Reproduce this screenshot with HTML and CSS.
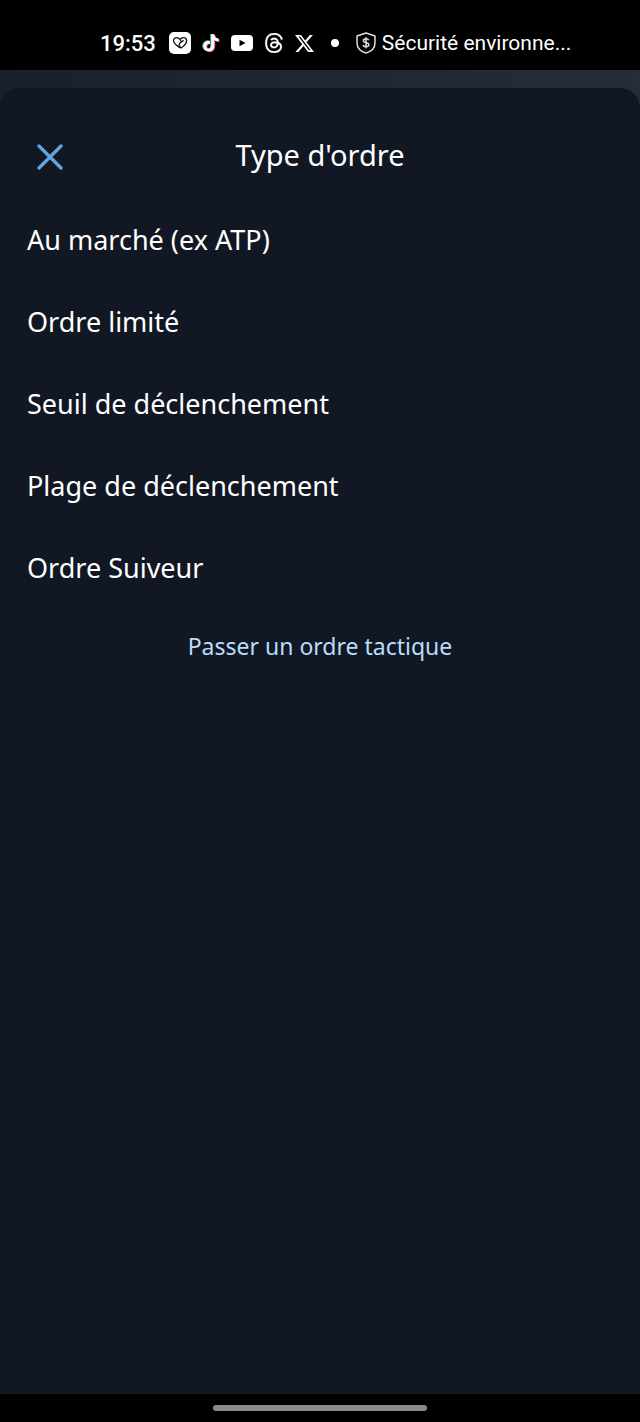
FILE: index.html
```html
<!DOCTYPE html>
<html lang="fr">
<head>
<meta charset="utf-8">
<meta name="viewport" content="width=device-width, initial-scale=1">
<title>Type d'ordre</title>
<link rel="stylesheet" href="styles.css">
</head>
<body>
<div class="status-bar">
  <time class="clock">19:53</time>
  <div class="apps">
    <svg class="icon-heart" viewBox="0 0 22 22" aria-hidden="true"><rect width="22" height="22" rx="5" fill="#fff"/><path d="M10.500 15.500C7.500 13.500 4.500 11.500 4.500 8.800C4.500 6.800 6 5.600 7.700 5.600C9.300 5.600 10.300 6.400 11 7.500C11.800 6.400 13 5.600 14.500 5.600C16.300 5.600 17.600 7 17.600 8.700C17.600 11.500 14.500 14.300 12 16C9.800 14 9.600 12.200 11.200 10.800C12.500 9.800 13.500 9.800 14.200 8.600M11 7.500 12.300 9.800" fill="none" stroke="#111" stroke-width="1.300" stroke-linecap="round" stroke-linejoin="round"/></svg>
    <svg class="icon-tiktok" viewBox="0 0 25 25" aria-hidden="true"><defs><path id="note" d="M12.525.02c1.31-.02 2.61-.01 3.91-.02.08 1.53.63 3.09 1.75 4.17 1.12 1.11 2.7 1.62 4.24 1.79v4.03c-1.44-.05-2.89-.35-4.2-.97-.57-.26-1.1-.59-1.62-.93-.01 2.92.01 5.84-.02 8.75-.08 1.4-.54 2.79-1.35 3.94-1.31 1.92-3.58 3.17-5.91 3.21-1.43.08-2.86-.31-4.08-1.03-2.02-1.19-3.44-3.37-3.65-5.71-.02-.5-.03-1-.01-1.49.18-1.9 1.12-3.72 2.58-4.96 1.66-1.44 3.98-2.13 6.15-1.72.02 1.48-.04 2.96-.04 4.44-.99-.32-2.15-.23-3.02.37-.63.41-1.11 1.04-1.36 1.75-.21.51-.15 1.07-.14 1.61.24 1.64 1.82 3.02 3.5 2.87 1.12-.01 2.19-.66 2.77-1.61.19-.33.4-.67.41-1.06.1-1.79.06-3.57.07-5.36.01-4.03-.01-8.05.02-12.07z"/></defs><use href="#note" x="-1" fill="#4de1dc"/><use href="#note" x="1.800" y="1" fill="#ef3e5c"/><use href="#note" x=".5" y=".4" fill="#fff"/></svg>
    <svg class="icon-youtube" viewBox="0 0 22 16" aria-hidden="true"><rect width="22" height="16" rx="4" fill="#fff"/><path d="M8.500 4.800 14.500 8 8.500 11.200Z" fill="#000"/></svg>
    <svg class="icon-threads" viewBox="0 0 24 24" aria-hidden="true"><path fill="#fff" stroke="#fff" stroke-width=".3" d="M12.186 24h-.007c-3.581-.024-6.334-1.205-8.184-3.509C2.35 18.44 1.5 15.586 1.472 12.01v-.017c.03-3.579.879-6.43 2.525-8.482C5.845 1.205 8.6.024 12.18 0h.014c2.746.02 5.043.725 6.826 2.098 1.677 1.29 2.858 3.13 3.509 5.467l-2.04.569c-1.104-3.96-3.898-5.984-8.304-6.015-2.91.022-5.11.936-6.54 2.717C4.307 6.504 3.616 8.914 3.589 12c.027 3.086.718 5.496 2.057 7.164 1.43 1.783 3.631 2.698 6.54 2.717 2.623-.02 4.358-.631 5.8-2.045 1.647-1.613 1.618-3.593 1.09-4.798-.31-.71-.873-1.3-1.634-1.75-.192 1.352-.622 2.446-1.284 3.272-.886 1.102-2.14 1.704-3.73 1.79-1.202.065-2.361-.218-3.259-.801-1.063-.689-1.685-1.74-1.752-2.964-.065-1.19.408-2.285 1.33-3.082.88-.76 2.119-1.207 3.583-1.291a13.853 13.853 0 0 1 3.02.142c-.126-.742-.375-1.332-.75-1.757-.513-.586-1.308-.883-2.359-.89h-.029c-.844 0-1.992.232-2.721 1.32L7.734 7.847c.98-1.454 2.568-2.256 4.478-2.256h.044c3.194.02 5.097 1.975 5.287 5.388.108.046.216.094.321.142 1.49.7 2.58 1.761 3.154 3.07.797 1.82.871 4.79-1.548 7.158-1.85 1.81-4.094 2.628-7.277 2.65Zm1.003-11.69c-.242 0-.487.007-.739.021-1.836.103-2.98.946-2.916 2.143.067 1.256 1.452 1.839 2.784 1.767 1.224-.065 2.818-.543 3.086-3.71a10.5 10.5 0 0 0-2.215-.221z"/></svg>
    <svg class="icon-x" viewBox="0 0 24 24" aria-hidden="true"><path fill="#fff" d="M18.901 1.153h3.68l-8.04 9.19L24 22.846h-7.406l-5.8-7.584-6.638 7.584H.474l8.6-9.83L0 1.154h7.594l5.243 6.932ZM17.61 20.644h2.039L6.486 3.24H4.298Z"/></svg>
  </div>
  <span class="dot"></span>
  <div class="notice">
    <svg class="icon-shield" viewBox="0 0 20 22" fill="none" stroke="#ddd" aria-hidden="true"><path d="M10 1 19 4V11C19 16 15 19.500 10 21C5 19.500 1 16 1 11V4Z" stroke-width="1.500" stroke-linejoin="round"/><path d="M12.700 8.300C12.300 7.100 11.300 6.800 10 6.800C8.500 6.800 7.400 7.500 7.400 8.700C7.400 11.500 12.800 9.800 12.800 12.700C12.800 14 11.600 14.700 10 14.700C8.400 14.700 7.400 14 7.200 12.800M10 5.300V16.200" stroke-width="1.500"/></svg>
    <span>Sécurité environne...</span>
  </div>
</div>
<div class="backdrop">
  <main class="sheet">
    <header class="sheet-header">
      <button class="close" type="button" aria-label="Fermer"><svg class="icon-close" viewBox="0 0 26 26" aria-hidden="true"><path d="M2 2 24 24M24 2 2 24" stroke="#5fa6dc" stroke-width="3.300" stroke-linecap="round"/></svg></button>
      <h1 class="title">Type d'ordre</h1>
    </header>
    <ul class="orders">
      <li><button class="order" type="button">Au marché (ex ATP)</button></li>
      <li><button class="order" type="button">Ordre limité</button></li>
      <li><button class="order" type="button">Seuil de déclenchement</button></li>
      <li><button class="order" type="button">Plage de déclenchement</button></li>
      <li><button class="order" type="button">Ordre Suiveur</button></li>
    </ul>
    <a class="tactical" href="#">Passer un ordre tactique</a>
  </main>
</div>
<div class="nav-bar"><span class="handle"></span></div>
</body>
</html>
```
FILE: styles.css
```css
* { box-sizing: border-box; }

body {
  margin: 0;
  min-height: 100vh;
  display: flex;
  flex-direction: column;
  background: #000;
  color: #fff;
  font-family: "Noto Sans", sans-serif;
}

button {
  border: 0;
  padding: 0;
  background: none;
  color: inherit;
  font: inherit;
  cursor: pointer;
}

svg { display: block; flex: none; }

.status-bar {
  height: 70px;
  padding: 16px 16px 0 100px;
  display: flex;
  align-items: center;
  font-family: Roboto, sans-serif;
  font-size: 21px;
  white-space: nowrap;
}

.clock {
  font-size: 22px;
  font-weight: 500;
}

.apps {
  display: flex;
  align-items: center;
  gap: 11px;
  margin: 0 17px 0 13px;
}

.icon-heart { width: 22px; height: 22px; }
.icon-tiktok { width: 18px; height: 20px; }
.icon-youtube { width: 22px; height: 16px; }
.icon-threads { width: 20px; height: 20px; }
.icon-x { width: 19px; height: 19px; }
.icon-shield { width: 20px; height: 22px; }
.icon-close { width: 26px; height: 26px; }

.dot {
  flex: none;
  width: 8px;
  height: 8px;
  border-radius: 50%;
  background: #fff;
}

.notice {
  display: flex;
  align-items: center;
  gap: 6px;
  margin-left: 17px;
}

.backdrop {
  flex: 1;
  display: flex;
  flex-direction: column;
  padding-top: 18px;
  background: linear-gradient(90deg, #18202b, #1f2733 50%, #242d39);
}

.sheet {
  flex: 1;
  display: flex;
  flex-direction: column;
  border-radius: 20px 20px 0 0;
  background: #111824;
}

.sheet-header {
  display: grid;
  grid-template-columns: 1fr auto 1fr;
  align-items: center;
  height: 110px;
  padding: 28px 37px 0;
}

.close { justify-self: start; }

.title {
  margin: 0;
  padding-bottom: 4px;
  font-size: 29px;
  line-height: 40px;
  font-weight: 400;
}

.orders {
  margin: 0;
  padding: 0;
  list-style: none;
}

.order {
  width: 100%;
  height: 82px;
  padding: 0 27px;
  font-size: 27px;
  text-align: left;
}

.tactical {
  align-self: center;
  padding: 20px;
  color: #b9dcfa;
  font-size: 23px;
  line-height: 36px;
  text-decoration: none;
}

.nav-bar {
  height: 28px;
  display: flex;
  align-items: center;
  justify-content: center;
}

.handle {
  width: 33.3%;
  height: 6px;
  border-radius: 3px;
  background: #888;
}
```
